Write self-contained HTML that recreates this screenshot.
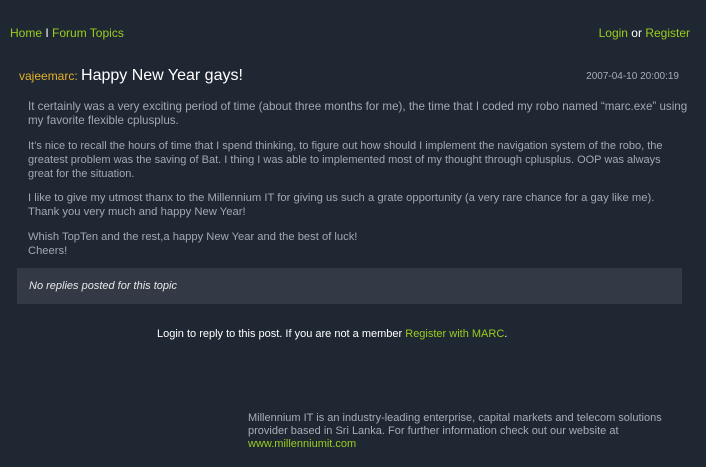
<!DOCTYPE html>
<html><head><style>
body{margin:0;background:#1f2733;width:706px;height:467px;overflow:hidden;font-family:"Liberation Sans",sans-serif;position:relative}
div,span{position:absolute;white-space:nowrap}
.g{color:#9acd1e}
.nav{font-size:12px;top:26px}
.b{left:28px;font-size:11.6px;color:#a3a8b0;line-height:14px}
</style></head><body>
<div class="nav g" style="left:10px">Home <span style="position:static;color:#fff">I</span> Forum Topics</div>
<div class="nav" style="right:16px;color:#fff"><span class="g" style="position:static">Login</span> or <span class="g" style="position:static">Register</span></div>
<div style="left:19px;top:67px;font-size:12px;color:#e3b02a">vajeemarc: <span style="position:static;color:#fff;font-size:16px">Happy New Year gays!</span></div>
<div style="right:27px;top:71px;font-size:10px;color:#a8adb5">2007-04-10 20:00:19</div>
<div class="b" style="top:100px">It certainly was a very exciting period of time (about three months for me), the time that I coded my robo named “marc.exe” using<br>my favorite flexible cplusplus.</div>
<div class="b" style="top:139px;font-size:11px">It’s nice to recall the hours of time that I spend thinking, to figure out how should I implement the navigation system of the robo, the<br>greatest problem was the saving of Bat. I thing I was able to implemented most of my thought through cplusplus. OOP was always<br>great for the situation.</div>
<div class="b" style="top:191px;font-size:11.25px">I like to give my utmost thanx to the Millennium IT for giving us such a grate opportunity (a very rare chance for a gay like me).<br>Thank you very much and happy New Year!</div>
<div class="b" style="top:230px;font-size:11.2px">Whish TopTen and the rest,a happy New Year and the best of luck!<br>Cheers!</div>
<div style="left:17px;top:268px;width:665px;height:36px;background:#343a45"></div>
<div style="left:29px;top:280px;font-size:11px;font-style:italic;color:#e8e8e8">No replies posted for this topic</div>
<div style="left:157px;top:328px;font-size:11px;color:#fff">Login to reply to this post. If you are not a member <span class="g" style="position:static">Register with MARC</span>.</div>
<div style="left:248px;top:412px;font-size:11px;color:#a8adb5;line-height:13px">Millennium IT is an industry-leading enterprise, capital markets and telecom solutions<br>provider based in Sri Lanka. For further information check out our website at<br><span class="g" style="position:static">www.millenniumit.com</span></div>
</body></html>
